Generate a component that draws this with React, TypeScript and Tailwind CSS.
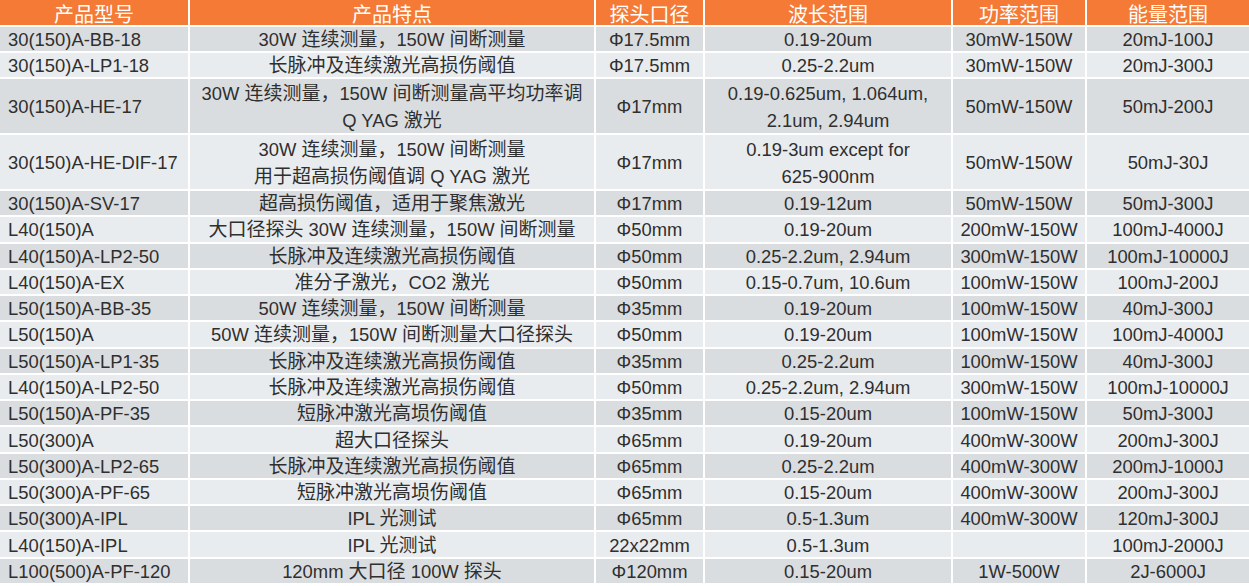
import React from "react";

const headers = ["产品型号", "产品特点", "探头口径", "波长范围", "功率范围", "能量范围"];

// 每行：型号、特点、口径、波长、功率、能量
const rows: string[][] = [
  ["30(150)A-BB-18", "30W 连续测量，150W 间断测量", "Φ17.5mm", "0.19-20um", "30mW-150W", "20mJ-100J"],
  ["30(150)A-LP1-18", "长脉冲及连续激光高损伤阈值", "Φ17.5mm", "0.25-2.2um", "30mW-150W", "20mJ-300J"],
  ["30(150)A-HE-17", "30W 连续测量，150W 间断测量高平均功率调\nQ YAG 激光", "Φ17mm", "0.19-0.625um, 1.064um,\n2.1um, 2.94um", "50mW-150W", "50mJ-200J"],
  ["30(150)A-HE-DIF-17", "30W 连续测量，150W 间断测量\n用于超高损伤阈值调 Q YAG 激光", "Φ17mm", "0.19-3um except for\n625-900nm", "50mW-150W", "50mJ-30J"],
  ["30(150)A-SV-17", "超高损伤阈值，适用于聚焦激光", "Φ17mm", "0.19-12um", "50mW-150W", "50mJ-300J"],
  ["L40(150)A", "大口径探头 30W 连续测量，150W 间断测量", "Φ50mm", "0.19-20um", "200mW-150W", "100mJ-4000J"],
  ["L40(150)A-LP2-50", "长脉冲及连续激光高损伤阈值", "Φ50mm", "0.25-2.2um, 2.94um", "300mW-150W", "100mJ-10000J"],
  ["L40(150)A-EX", "准分子激光，CO2 激光", "Φ50mm", "0.15-0.7um, 10.6um", "100mW-150W", "100mJ-200J"],
  ["L50(150)A-BB-35", "50W 连续测量，150W 间断测量", "Φ35mm", "0.19-20um", "100mW-150W", "40mJ-300J"],
  ["L50(150)A", "50W 连续测量，150W 间断测量大口径探头", "Φ50mm", "0.19-20um", "100mW-150W", "100mJ-4000J"],
  ["L50(150)A-LP1-35", "长脉冲及连续激光高损伤阈值", "Φ35mm", "0.25-2.2um", "100mW-150W", "40mJ-300J"],
  ["L40(150)A-LP2-50", "长脉冲及连续激光高损伤阈值", "Φ50mm", "0.25-2.2um, 2.94um", "300mW-150W", "100mJ-10000J"],
  ["L50(150)A-PF-35", "短脉冲激光高埙伤阈值", "Φ35mm", "0.15-20um", "100mW-150W", "50mJ-300J"],
  ["L50(300)A", "超大口径探头", "Φ65mm", "0.19-20um", "400mW-300W", "200mJ-300J"],
  ["L50(300)A-LP2-65", "长脉冲及连续激光高损伤阈值", "Φ65mm", "0.25-2.2um", "400mW-300W", "200mJ-1000J"],
  ["L50(300)A-PF-65", "短脉冲激光高埙伤阈值", "Φ65mm", "0.15-20um", "400mW-300W", "200mJ-300J"],
  ["L50(300)A-IPL", "IPL 光测试", "Φ65mm", "0.5-1.3um", "400mW-300W", "120mJ-300J"],
  ["L40(150)A-IPL", "IPL 光测试", "22x22mm", "0.5-1.3um", "", "100mJ-2000J"],
  ["L100(500)A-PF-120", "120mm 大口径 100W 探头", "Φ120mm", "0.15-20um", "1W-500W", "2J-6000J"],
];

// 中文字符稍大一点，和西文对齐
function Mixed({ text }: { text: string }) {
  const parts = text.split(/([\u3000-\u9fff\uff00-\uffef]+)/);
  return (
    <>
      {parts.map((p, i) =>
        /[\u3000-\u9fff\uff00-\uffef]/.test(p) ? (
          <span key={i} className="text-[19px]">
            {p}
          </span>
        ) : (
          <React.Fragment key={i}>{p}</React.Fragment>
        )
      )}
    </>
  );
}

function CellText({ text }: { text: string }) {
  const lines = text.split("\n");
  return (
    <div className={lines.length > 1 ? "leading-[27px]" : "leading-[24px]"}>
      {lines.map((l, i) => (
        <div key={i} className="whitespace-nowrap">
          <Mixed text={l} />
        </div>
      ))}
    </div>
  );
}

export default function App() {
  return (
    <div
      className="w-[1249px] h-[586px] bg-white overflow-hidden text-[#2f2f2f] text-[18.4px]"
      style={{ fontFamily: '"Liberation Sans", "Noto Sans CJK SC", sans-serif' }}
    >
      <div className="grid gap-[2px] grid-cols-[188px_404px_107px_246px_132px_1fr] grid-rows-[25px_24px_24px_54px_54px_repeat(15,24.27px)]">
        {headers.map((h) => (
          <div
            key={h}
            className="bg-[#f47a35] text-white text-[20px] leading-[25px] flex items-center justify-center pt-[1px]"
            style={{ fontFamily: '"Noto Sans CJK SC", sans-serif' }}
          >
            {h}
          </div>
        ))}
        {rows.map((row, r) =>
          row.map((cell, c) => (
            <div
              key={`${r}-${c}`}
              className={`flex items-center pt-[2px] ${c === 0 ? "justify-start pl-2" : "justify-center text-center"} ${
                r % 2 === 0 ? "bg-[#dadddf]" : "bg-[#e9ecee]"
              }`}
            >
              <CellText text={cell} />
            </div>
          ))
        )}
      </div>
    </div>
  );
}
